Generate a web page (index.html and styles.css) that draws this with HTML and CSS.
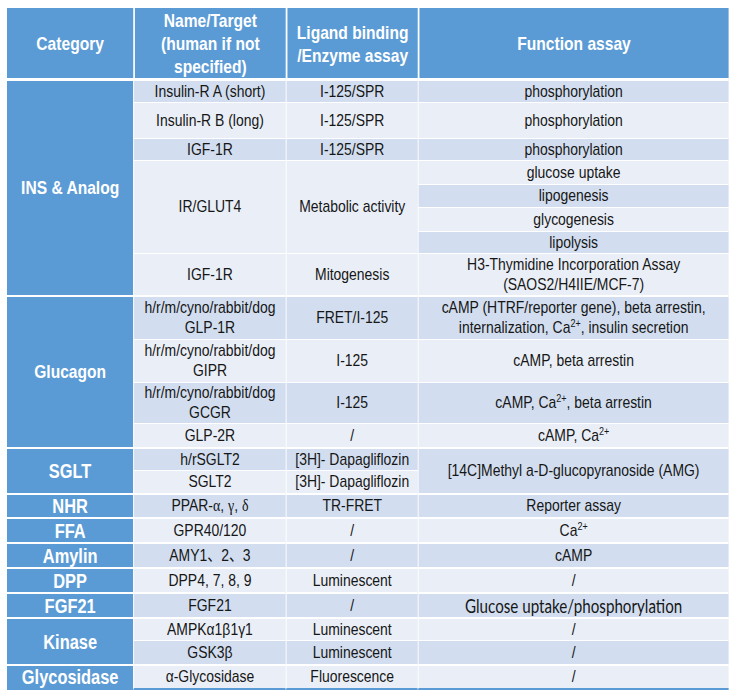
FILE: index.html
```html
<!DOCTYPE html>
<html>
<head>
<meta charset="utf-8">
<link rel="stylesheet" href="styles.css">
</head>
<body>
<div class="frame">
<table class="tbl">
  <colgroup>
    <col class="c1"><col class="c2"><col class="c3"><col class="c4">
  </colgroup>
  <thead>
    <tr class="h70">
      <th class="hd">Category</th>
      <th class="hd">Name/Target<br>(human if not<br>specified)</th>
      <th class="hd">Ligand binding<br>/Enzyme assay</th>
      <th class="hd">Function assay</th>
    </tr>
  </thead>
  <tbody>
    <tr class="h24 first">
      <td class="cat up" rowspan="8">INS &amp; Analog</td>
      <td class="d">Insulin-R A (short)</td>
      <td class="d">I-125/SPR</td>
      <td class="d">phosphorylation</td>
    </tr>
    <tr class="h36">
      <td class="l">Insulin-R B (long)</td>
      <td class="l">I-125/SPR</td>
      <td class="l">phosphorylation</td>
    </tr>
    <tr class="h22">
      <td class="d">IGF-1R</td>
      <td class="d">I-125/SPR</td>
      <td class="d">phosphorylation</td>
    </tr>
    <tr class="h24">
      <td class="l" rowspan="4">IR/GLUT4</td>
      <td class="l" rowspan="4">Metabolic activity</td>
      <td class="l">glucose uptake</td>
    </tr>
    <tr class="h23"><td class="d">lipogenesis</td></tr>
    <tr class="h24"><td class="l">glycogenesis</td></tr>
    <tr class="h22"><td class="d">lipolysis</td></tr>
    <tr class="h42">
      <td class="l">IGF-1R</td>
      <td class="l">Mitogenesis</td>
      <td class="l">H3-Thymidine Incorporation Assay<br>(SAOS2/H4IIE/MCF-7)</td>
    </tr>

    <tr class="h44 grp">
      <td class="cat up" rowspan="4">Glucagon</td>
      <td class="d">h/r/m/cyno/rabbit/dog<br>GLP-1R</td>
      <td class="d">FRET/I-125</td>
      <td class="d">cAMP (HTRF/reporter gene), beta arrestin,<br>internalization, Ca<sup>2+</sup>, insulin secretion</td>
    </tr>
    <tr class="h43">
      <td class="l">h/r/m/cyno/rabbit/dog<br>GIPR</td>
      <td class="l">I-125</td>
      <td class="l">cAMP, beta arrestin</td>
    </tr>
    <tr class="h40">
      <td class="d">h/r/m/cyno/rabbit/dog<br>GCGR</td>
      <td class="d">I-125</td>
      <td class="d">cAMP, Ca<sup>2+</sup>, beta arrestin</td>
    </tr>
    <tr class="h24">
      <td class="l">GLP-2R</td>
      <td class="l">/</td>
      <td class="l">cAMP, Ca<sup>2+</sup></td>
    </tr>

    <tr class="h23 grp">
      <td class="cat" rowspan="2">SGLT</td>
      <td class="d">h/rSGLT2</td>
      <td class="d">[3H]- Dapagliflozin</td>
      <td class="d" rowspan="2">[14C]Methyl a-D-glucopyranoside (AMG)</td>
    </tr>
    <tr class="h23">
      <td class="l">SGLT2</td>
      <td class="l">[3H]- Dapagliflozin</td>
    </tr>

    <tr class="h23 grp">
      <td class="cat">NHR</td>
      <td class="d">PPAR-<span class="greek">α</span>, <span class="greek">γ</span>, <span class="greek">δ</span></td>
      <td class="d">TR-FRET</td>
      <td class="d">Reporter assay</td>
    </tr>
    <tr class="h25 grp">
      <td class="cat">FFA</td>
      <td class="l">GPR40/120</td>
      <td class="l">/</td>
      <td class="l">Ca<sup>2+</sup></td>
    </tr>
    <tr class="h25 grp">
      <td class="cat">Amylin</td>
      <td class="d">AMY1、2、3</td>
      <td class="d">/</td>
      <td class="d">cAMP</td>
    </tr>
    <tr class="h25 grp">
      <td class="cat">DPP</td>
      <td class="l">DPP4, 7, 8, 9</td>
      <td class="l">Luminescent</td>
      <td class="l">/</td>
    </tr>
    <tr class="h25 grp">
      <td class="cat">FGF21</td>
      <td class="d">FGF21</td>
      <td class="d">/</td>
      <td class="d alt">Glucose uptake/phosphorylation</td>
    </tr>
    <tr class="h23 grp">
      <td class="cat" rowspan="2">Kinase</td>
      <td class="l">AMPKα1β1γ1</td>
      <td class="l">Luminescent</td>
      <td class="l">/</td>
    </tr>
    <tr class="h24">
      <td class="d">GSK3β</td>
      <td class="d">Luminescent</td>
      <td class="d">/</td>
    </tr>
    <tr class="h23 grp last">
      <td class="cat">Glycosidase</td>
      <td class="l">α-Glycosidase</td>
      <td class="l">Fluorescence</td>
      <td class="l">/</td>
    </tr>
  </tbody>
</table>
</div>
</body>
</html>
```

FILE: styles.css
```css
html, body {
  margin: 0;
  padding: 0;
  background: #ffffff;
}

body {
  padding: 8px 7px;
  font-family: "Liberation Sans", Arial, "Noto Sans CJK SC", sans-serif;
  color: #161616;
}

/* Clip box sized to the visible table. */
.frame {
  width: 722px;
  overflow: hidden;
}

/* The source uses a narrow face (Arial Narrow); emulate it by
   condensing the whole table horizontally. */
.tbl {
  width: 880px;
  table-layout: fixed;
  border-collapse: separate;
  border-spacing: 0;
  transform: scaleX(0.82);
  transform-origin: 0 0;
}

.c1 { width: 154px; }
.c2 { width: 186px; }
.c3 { width: 161px; }
.c4 { width: 379px; }

.tbl th,
.tbl td {
  padding: 0 2px;
  text-align: center;
  vertical-align: middle;
  border-left: 1px solid #ffffff;
  border-top: 1px solid #ffffff;
  white-space: nowrap;
}

.tbl td {
  font-size: 17px;
  line-height: 20px;
}

.hd {
  background: #5b9bd5;
  color: #ffffff;
  font-weight: bold;
  font-size: 19px;
  line-height: 23px;
}

.tbl th.hd { border-top: 0; padding-top: 1px; }
.tbl th.hd + th.hd { border-left: 2px solid #ffffff; }
.tbl th.hd:first-child { border-left: 0; }

.tbl td.cat {
  background: #5b9bd5;
  color: #ffffff;
  font-weight: bold;
  font-size: 20px;
  line-height: 22px;
  border-left: 0;
}

.tbl td.cat.up {
  font-size: 19px;
}

.d { background: #d2deef; }
.l { background: #eaeff7; }

.greek {
  font-family: "Liberation Serif", "DejaVu Serif", serif;
}

.tbl td.alt {
  font-family: "Lato", "Open Sans", sans-serif;
  font-size: 18.5px;
}

sup {
  font-size: 11px;
  line-height: 0;
  vertical-align: 6px;
}

.first td { border-top: 3px solid #ffffff; }
.grp td { border-top: 2px solid #ffffff; }
.last td { border-bottom: 2px solid #5b9bd5; }

.h70 { height: 70px; }
.h44 { height: 44px; }
.h43 { height: 43px; }
.h42 { height: 42px; }
.h40 { height: 40px; }
.h36 { height: 36px; }
.h25 { height: 25px; }
.h24 { height: 24px; }
.h23 { height: 23px; }
.h22 { height: 22px; }
```
